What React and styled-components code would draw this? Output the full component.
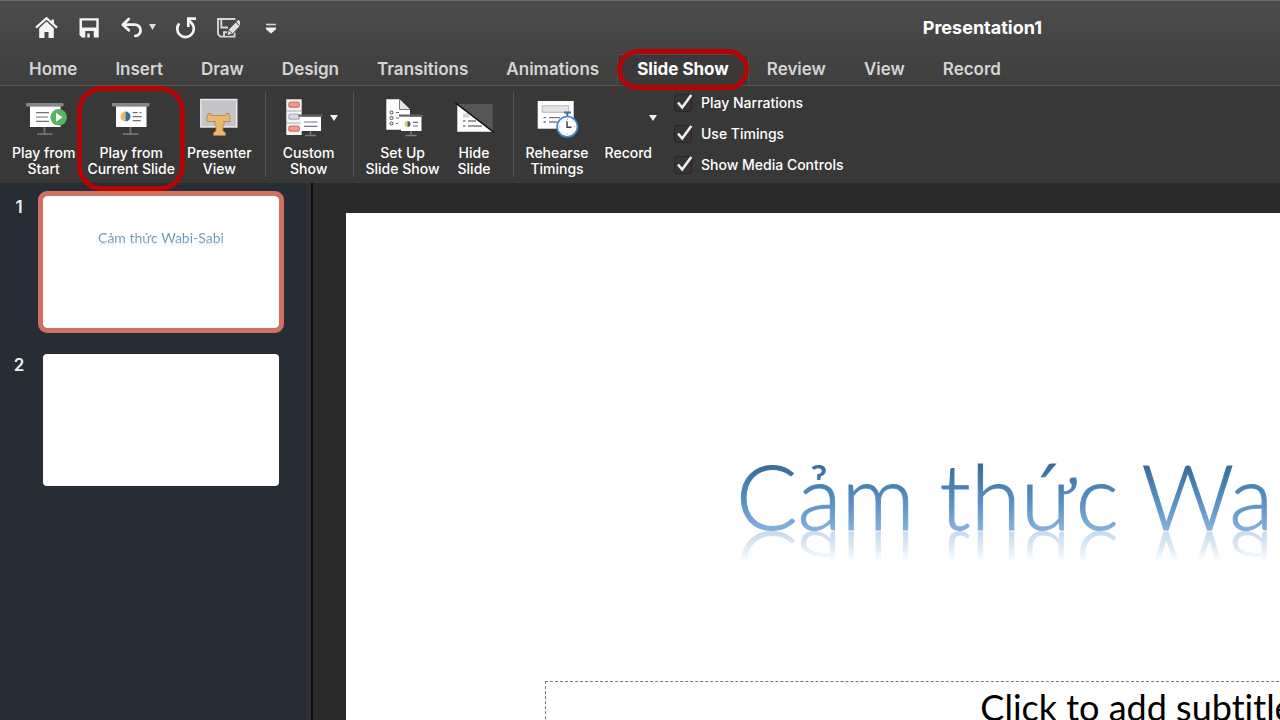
import React from "react";
import styled, { createGlobalStyle, css } from "styled-components";

const GlobalStyle = createGlobalStyle`
  * { box-sizing: border-box; }
  body {
    margin: 0;
    background: #2a2a2a;
    font-family: Inter, "Liberation Sans", sans-serif;
    color: #fff;
  }
  button { font: inherit; color: inherit; background: none; border: 0; padding: 0; }
  h1, p, ol { margin: 0; padding: 0; }
`;

const Window = styled.div`
  display: flex;
  flex-direction: column;
  height: 100vh;
  overflow: hidden;
`;

const Header = styled.header`
  background: linear-gradient(#4c4c4c, #3e3e3e);
  border-top: 1px solid #6a6a6a;
  border-bottom: 1px solid #555;
`;

const TitleBar = styled.div`
  display: flex;
  align-items: center;
  height: 54px;
  padding: 0 0 2px 35px;
`;

const QuickBar = styled.div`
  display: flex;
  align-items: center;
  gap: 18px;
`;

const QuickButton = styled.button`
  display: flex;
  align-items: center;
  gap: 6px;
  color: #f4f4f4;

  svg { display: block; }
`;

const DocTitle = styled.h1`
  margin-left: auto;
  padding: 2px 238px 0 0;
  font-size: 18px;
  line-height: 20px;
  font-weight: 700;
`;

const Tabs = styled.nav`
  display: flex;
  height: 30px;
  padding-left: 10px;
`;

const ringStyle = css`
  content: "";
  position: absolute;
  z-index: 2;
  border: 5px solid #b30505;
  pointer-events: none;
`;

const Tab = styled.button`
  position: relative;
  padding: 0 19px 2px;
  font-size: 17px;
  line-height: 26px;
  font-weight: ${(p) => (p.$active ? 700 : 600)};
  color: ${(p) => (p.$active ? "#fff" : "#d4d4d4")};
  white-space: nowrap;
  ${(p) =>
    p.$active &&
    css`
      background: #393939;
      box-shadow: 0 0 0 1px #505050;
      border-radius: 3px 3px 0 0;
      &::after {
        ${ringStyle}
        inset: -6px -1px -5px;
        border-radius: 21px;
      }
    `}
`;

const Ribbon = styled.div`
  display: flex;
  height: 97px;
  flex: none;
  background: #383838;
`;

const Group = styled.div`
  display: flex;
  align-items: flex-start;
  position: relative;
  gap: ${(p) => p.$gap || 0}px;
  padding: 11px ${(p) => p.$right || 7}px 0 ${(p) => p.$left || 7}px;

  &:not(:first-child)::before {
    content: "";
    position: absolute;
    left: 0;
    top: 6px;
    height: 85px;
    border-left: 1px solid #555;
  }
`;

const Tool = styled.button`
  position: relative;
  display: flex;
  flex-direction: column;
  align-items: center;
  gap: 6px;
  padding: 0 6px;
  font-size: 14px;
  line-height: 16px;
  font-weight: 500;
  text-align: center;
  white-space: pre;

  ${(p) =>
    p.$ringed &&
    css`
      &::after {
        ${ringStyle}
        inset: -11px -4px -14px;
        border-radius: 25px;
      }
    `}
`;

const IconBox = styled.span`
  display: block;
  width: 100%;
  height: 42px;

  & > svg {
    display: block;
    width: 48px;
    height: 42px;
    margin: 0 calc(50% - 24px);
  }
`;

const ToolCaret = styled.span`
  position: absolute;
  top: 18px;
  left: calc(50% + 21px);
  border: solid transparent;
  border-width: 6px 4px 0;
  border-top-color: #f0f0f0;
`;

const Checks = styled.div`
  display: flex;
  flex-direction: column;
  gap: 13px;
  padding: 8px 0 0 9px;
`;

const CheckLabel = styled.label`
  display: flex;
  align-items: center;
  gap: 9px;
  font-size: 14px;
  line-height: 18px;
  font-weight: 500;
`;

const CheckBox = styled.span`
  position: relative;
  display: block;
  width: 18px;
  height: 18px;

  input {
    appearance: none;
    display: block;
    width: 18px;
    height: 18px;
    margin: 0;
    background: #343434;
    border: 1px solid #262626;
    border-radius: 3px;
  }
  svg {
    position: absolute;
    inset: 0;
    overflow: visible;
    pointer-events: none;
  }
  input:not(:checked) + svg { display: none; }
`;

const Body = styled.div`
  display: flex;
  flex: 1;
  min-height: 0;
`;

const Sidebar = styled.aside`
  flex: none;
  width: 313px;
  padding-top: 8px;
  background: #272d35;
  border-right: 2px solid #0c0c0c;
  box-shadow: inset -5px 0 #303034;
`;

const SlideList = styled.ol`
  display: flex;
  flex-direction: column;
  gap: 16px;
  list-style: none;
`;

const SlideItem = styled.li`
  display: flex;
`;

const SlideNumber = styled.span`
  width: 38px;
  padding-top: 5px;
  font-size: 17px;
  line-height: 22px;
  font-weight: 600;
  text-align: center;
  color: #eee;
`;

const Thumb = styled.button`
  width: 246px;
  height: 142px;
  padding-top: 34px;
  display: flex;
  justify-content: center;
  align-items: flex-start;
  border: 5px solid ${(p) => (p.$selected ? "#d0705f" : "transparent")};
  border-radius: 9px;
  background: #fff;
  background-clip: padding-box;
`;

const wordArt = css`
  font-family: Lato, Carlito, "Open Sans", sans-serif;
  white-space: nowrap;
  font-variant-ligatures: none;
  color: transparent;
  background-clip: text;
  -webkit-background-clip: text;
`;

const ThumbTitle = styled.span`
  ${wordArt}
  font-size: 14px;
  font-weight: 400;
  line-height: 16px;
  background-image: linear-gradient(#5b87a5, #82abc8);
  -webkit-box-reflect: below -6px linear-gradient(transparent 50%, rgba(0, 0, 0, 0.4));
`;

const Canvas = styled.main`
  flex: 1;
  min-width: 0;
  overflow: hidden;
  padding: 30px 0 0 33px;
  background: #2a2a2a;
`;

const Slide = styled.section`
  width: 1598px;
  height: 900px;
  padding: 227px 199px 0;
  background: #fff;
`;

const SlideTitle = styled.div`
  display: flex;
  justify-content: center;
  height: 241px;
  padding-right: 14px;
`;

const TitleText = styled.p`
  ${wordArt}
  height: 110px;
  font-size: 91px;
  font-weight: 300;
  line-height: 110px;
  -webkit-text-stroke: 1px transparent;
  background-image: linear-gradient(#35608a 16%, #3f76a8 32%, #5e94c8 60%, #82aedb 80%);
  -webkit-box-reflect: below -38px linear-gradient(transparent 55%, rgba(0, 0, 0, 0.5) 85%);
`;

const Subtitle = styled.div`
  height: 220px;
  padding: 3px 16px 0 0;
  border: 1px dashed #777;
  text-align: center;
  font-family: Lato, Carlito, "Open Sans", sans-serif;
  font-variant-ligatures: none;
  font-size: 36px;
  line-height: 44px;
  color: #000;
`;

const Screen = ({ x = 0 }) => (
  <g transform={`translate(${x} 0)`}>
    <rect x="6" y="6" width="37.5" height="3.5" rx="1" fill="#85878a" />
    <rect x="10" y="9.5" width="30.5" height="20.5" fill="#fff" />
    <path d="M24.5 30v7M17 37.2h15.5" stroke="#707274" strokeWidth="1.8" fill="none" />
  </g>
);

const SmallScreen = ({ x = 0 }) => (
  <g transform={`translate(${x} 0)`}>
    <path d="M12 33v4.500M6.500 38.500h11" stroke="#7a7c7e" strokeWidth="1.600" fill="none" />
    <rect x="2" y="19.500" width="20.500" height="14.500" fill="#fff" />
    <rect x="0" y="17.500" width="24" height="2.200" fill="#606266" />
  </g>
);

const PlayStartIcon = () => (
  <svg viewBox="0 0 48 42">
    <Screen />
    <path d="M16 15.700h13M16 20h12M16 24.300h13" stroke="#6d7078" strokeWidth="1.200" />
    <circle cx="38.700" cy="20.300" r="8.300" fill="#58b368" />
    <path d="M36 15.800v9l6.500-4.500z" fill="#fff" />
  </svg>
);

const PlayCurrentIcon = () => (
  <svg viewBox="0 0 48 42">
    <Screen x={-1} />
    <path d="M18.500 14.500a5 5 0 0 0 0 10z" fill="#eab765" />
    <path d="M18.500 14.500a5 5 0 0 1 0 10z" fill="#3a6c98" />
    <path d="M25.700 15.700h5M25.700 19.700h9M25.700 23.700h8" stroke="#6d7078" strokeWidth="1.200" />
    <path d="M32.500 15.700h2" stroke="#6d7078" strokeWidth="1.200" />
  </svg>
);

const PresenterIcon = () => (
  <svg viewBox="0 0 48 42">
    <rect x="5.800" y="2.500" width="36" height="27.500" fill="#c3c5c8" stroke="#ececec" strokeWidth="1.400" />
    <path d="M13 16.500h3v2h15v-2h3v2.500h1v5.500h-6.500l1 1.500-1.500 3v4.500l2.500 2.500v2.500h-12v-2.500l2.500-2.500v-4.500l-1.500-3 1-1.500H12v-5.500h1z" fill="#ecb86f" stroke="#a9783a" strokeWidth="0.700" />
  </svg>
);

const CustomShowIcon = () => (
  <svg viewBox="0 0 48 42">
    <rect x="1.300" y="2.300" width="15.400" height="35.700" fill="#f4f4f4" />
    <path d="M1.300 14h15.400M1.300 26h15.400" stroke="#a8aaac" strokeWidth="1" />
    <g strokeWidth="1.200">
      <rect x="3.800" y="5.200" width="10.500" height="5" rx="2" fill="#f09a8c" stroke="#cf7466" />
      <rect x="3.800" y="17.200" width="10.500" height="5" rx="2" fill="#d5dade" stroke="#a9b3bc" />
      <rect x="3.800" y="29.200" width="10.500" height="5" rx="2" fill="#f09a8c" stroke="#cf7466" />
    </g>
    <SmallScreen x={13.500} />
    <path d="M19 25h13.500M19 29.300h13.500" stroke="#6d7098" strokeWidth="1.200" />
  </svg>
);

const SetUpIcon = () => (
  <svg viewBox="0 0 48 42">
    <path d="M7.300 2.300h13.200L31 12.500v20.200H7.300z" fill="#fff" />
    <path d="M20.500 2.300v10.200H31" fill="#e4e4e4" stroke="#77797c" strokeWidth="1" />
    <g fill="none" stroke="#66686c" strokeWidth="1.100">
      <circle cx="12.500" cy="15.500" r="1.500" />
      <circle cx="12.500" cy="21" r="1.500" />
      <circle cx="12.500" cy="26.500" r="1.500" />
      <path d="M17 15.500h3M17 21h3M17 26.500h2" />
    </g>
    <SmallScreen x={20} />
    <path d="M28.500 24a3 3 0 0 0 0 6z" fill="#dfd057" />
    <path d="M28.500 24a3 3 0 0 1 0 6z" fill="#4b5d73" />
    <path d="M34 25.300h5M34 29h5" stroke="#6d7098" strokeWidth="1.200" />
  </svg>
);

const HideSlideIcon = () => (
  <svg viewBox="0 0 48 42">
    <path d="M7.300 7H42.700V34.500z" fill="#555657" />
    <path d="M7.300 7V34.700H42.500z" fill="#fff" />
    <path d="M13 18.500h6" stroke="#d3d3d6" strokeWidth="4" />
    <path d="M13 24h2.500M18 24h8M13 29h2.500M18 29h14" stroke="#7a7c80" strokeWidth="1.300" />
    <path d="M5.500 5.800l38.500 29.700" stroke="#111" strokeWidth="1.500" />
  </svg>
);

const RehearseIcon = () => (
  <svg viewBox="0 0 48 42">
    <rect x="4.700" y="4" width="36" height="27.700" fill="#fff" />
    <rect x="9.300" y="8.800" width="26.500" height="6.500" fill="#e2e3e6" stroke="#b5b7bb" />
    <path d="M10.500 20.700H13M16 20.700h11M10.500 25H13M16 25h8" stroke="#777a80" strokeWidth="1.300" />
    <path d="M31 15.500h7M34.300 15.500v4" stroke="#3d6f9f" strokeWidth="2" />
    <circle cx="34.300" cy="29.700" r="10.200" fill="#fff" stroke="#4a86bd" strokeWidth="1.700" />
    <path d="M34.300 21.500v1.500M34.300 36.500V38M26 29.700h1.500M41 29.700h1.500M28.500 23.900l1 1M40.100 35.500l-1-1M28.500 35.500l1-1M40.100 23.900l-1 1" stroke="#9ab7d2" strokeWidth="1" />
    <path d="M34 24.300V30.200h4.500" fill="none" stroke="#3a3d42" strokeWidth="1.400" />
  </svg>
);

const QuickIcon = ({ children }) => (
  <svg width="24" height="24" viewBox="0 0 24 24" fill="none">
    {children}
  </svg>
);

const Caret = () => (
  <svg width="7" height="6" viewBox="0 0 7 6">
    <path d="M0 0h7L3.500 6z" fill="#dcdcdc" />
  </svg>
);

const QUICK = [
  {
    label: "Home",
    icon: (
      <>
        <path d="M1 12.700L11.500 3.200 22 12.700M17.800 4.500v4" stroke="currentColor" strokeWidth="2.300" />
        <path d="M4.200 13.200l7.300-6.600 7.300 6.600V23h-5.300v-6h-4v6H4.200z" fill="currentColor" />
      </>
    ),
  },
  {
    label: "Save",
    icon: (
      <path
        fillRule="evenodd"
        fill="currentColor"
        d="M2.500 3.200h19.200v19.300H5L2.500 20zM5 5.500v7h14.300v-7zM8.300 16v6.500h2V18.500h2.400v4h4V16z"
      />
    ),
  },
  {
    label: "Undo",
    caret: true,
    icon: (
      <path
        d="M9.800 4L3.800 9.700l6 5.600M4.500 9.700h11.200a5.600 5.600 0 0 1 .6 11.200"
        stroke="currentColor"
        strokeWidth="2.700"
        strokeLinecap="round"
        strokeLinejoin="round"
      />
    ),
  },
  {
    label: "Repeat",
    icon: (
      <>
        <path d="M5.300 8.300A8.300 8.300 0 1 0 18.200 8.800L14.500 4.800" stroke="currentColor" strokeWidth="2.700" />
        <path d="M14.300 12V3.700H22" stroke="currentColor" strokeWidth="2.700" />
      </>
    ),
  },
  {
    label: "Edit document",
    icon: (
      <>
        <path d="M19.500 4H2v15.200l2.300 2.400H18.500v-4M5.300 4.500v8H12M8 21.500V17.200h3.500" stroke="#d6d6d6" strokeWidth="1.900" />
        <path d="M10.800 20.800l1.600-6.200L22.300 4.300l4.400 4.200L16.600 19z" fill="#e0e0e0" stroke="#454545" strokeWidth="1" />
        <path d="M19.700 7l4.200 4M12.600 15l3.600 3.500" stroke="#454545" strokeWidth="1" />
      </>
    ),
  },
  {
    label: "Customize toolbar",
    icon: (
      <>
        <path d="M8 9.500h10" stroke="#cfcfcf" strokeWidth="1.600" />
        <path d="M8 12.500h10v1.800L13 18.500l-5-4.200z" fill="#f2f2f2" />
      </>
    ),
  },
];

const TABS = ["Home", "Insert", "Draw", "Design", "Transitions", "Animations", "Slide Show", "Review", "View", "Record"];

const GROUPS = [
  {
    left: 6,
    right: 7,
    tools: [
      { label: "Play from\nStart", Icon: PlayStartIcon },
      { label: "Play from\nCurrent Slide", Icon: PlayCurrentIcon, ringed: true },
      { label: "Presenter\nView", Icon: PresenterIcon },
    ],
  },
  { left: 12, right: 12, tools: [{ label: "Custom\nShow", Icon: CustomShowIcon, caret: true }] },
  {
    gap: 6,
    right: 16,
    tools: [
      { label: "Set Up\nSlide Show", Icon: SetUpIcon },
      { label: "Hide\nSlide", Icon: HideSlideIcon },
    ],
  },
  {
    gap: 4,
    tools: [
      { label: "Rehearse\nTimings", Icon: RehearseIcon },
      { label: "Record", caret: true },
    ],
  },
];

const OPTIONS = ["Play Narrations", "Use Timings", "Show Media Controls"];

export default function App() {
  return (
    <Window>
      <GlobalStyle />
      <Header>
        <TitleBar>
          <QuickBar>
            {QUICK.map(({ label, icon, caret }) => (
              <QuickButton key={label} aria-label={label}>
                <QuickIcon>{icon}</QuickIcon>
                {caret && <Caret />}
              </QuickButton>
            ))}
          </QuickBar>
          <DocTitle>Presentation1</DocTitle>
        </TitleBar>
        <Tabs>
          {TABS.map((name) => (
            <Tab key={name} $active={name === "Slide Show"}>
              {name}
            </Tab>
          ))}
        </Tabs>
      </Header>
      <Ribbon>
        {GROUPS.map((group, i) => (
          <Group key={i} $gap={group.gap} $left={group.left} $right={group.right}>
            {group.tools.map(({ label, Icon, ringed, caret }) => (
              <Tool key={label} $ringed={ringed}>
                <IconBox>{Icon && <Icon />}</IconBox>
                {label}
                {caret && <ToolCaret />}
              </Tool>
            ))}
          </Group>
        ))}
        <Checks>
          {OPTIONS.map((name) => (
            <CheckLabel key={name}>
              <CheckBox>
                <input type="checkbox" defaultChecked />
                <svg width="18" height="18" viewBox="0 0 18 18" fill="none">
                  <path d="M4 8.500l4.200 5L17.300 1" stroke="#f0f0f0" strokeWidth="2.600" />
                </svg>
              </CheckBox>
              {name}
            </CheckLabel>
          ))}
        </Checks>
      </Ribbon>
      <Body>
        <Sidebar>
          <SlideList>
            <SlideItem>
              <SlideNumber>1</SlideNumber>
              <Thumb $selected aria-label="Slide 1">
                <ThumbTitle>Cảm thức Wabi-Sabi</ThumbTitle>
              </Thumb>
            </SlideItem>
            <SlideItem>
              <SlideNumber>2</SlideNumber>
              <Thumb aria-label="Slide 2" />
            </SlideItem>
          </SlideList>
        </Sidebar>
        <Canvas>
          <Slide>
            <SlideTitle>
              <TitleText>Cảm thức Wabi-Sabi</TitleText>
            </SlideTitle>
            <Subtitle>Click to add subtitle</Subtitle>
          </Slide>
        </Canvas>
      </Body>
    </Window>
  );
}
